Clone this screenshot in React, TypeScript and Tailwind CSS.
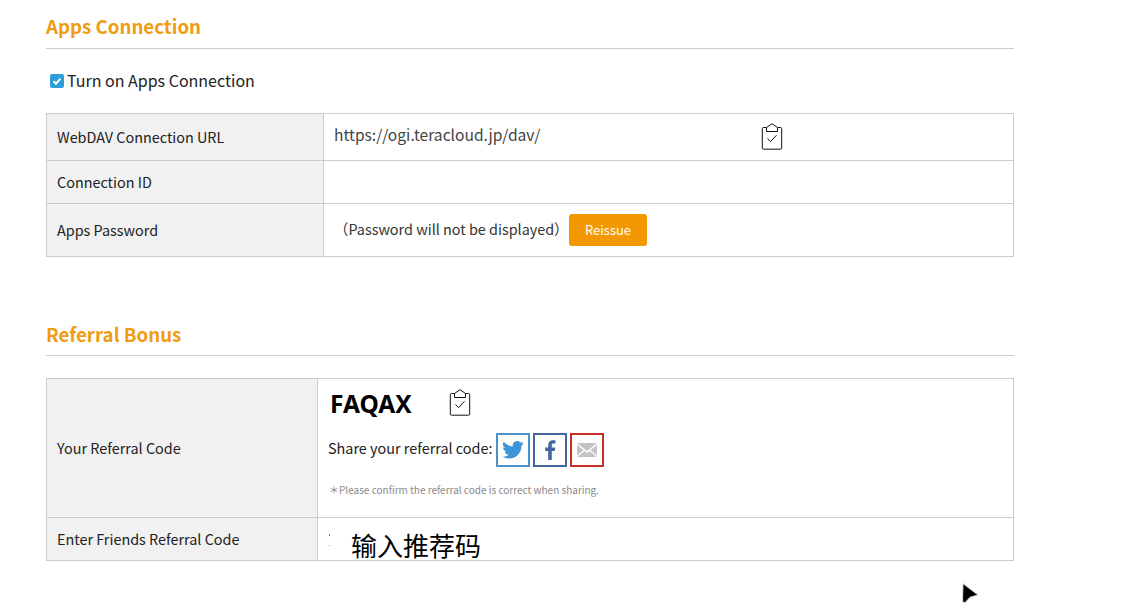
const font = { sans: "font-['Noto_Sans_CJK_JP','Noto_Sans',sans-serif]" };

const ClipboardIcon = () => (
  <svg width="22" height="27" viewBox="0 0 22 27" fill="none" stroke="#111" strokeWidth="1" strokeLinejoin="round">
    <path d="M5.500 4.500H2.500a1.200 1.200 0 0 0-1.200 1.200v19.300a1.200 1.200 0 0 0 1.200 1.200h17a1.200 1.200 0 0 0 1.200-1.200V5.700a1.200 1.200 0 0 0-1.200-1.200H16.500" />
    <path d="M5.500 8.500V4.500L11 .7l5.500 3.800v4z" />
    <path d="M6.500 15.500l3 3.200 6-6.500" />
  </svg>
);

const ShareButton = ({ border, children }: { border: string; children: React.ReactNode }) => (
  <span className={`flex h-[34px] w-[34px] items-center justify-center border-2 ${border}`}>{children}</span>
);

const SectionTitle = ({ children, className }: { children: string; className: string }) => (
  <h2 className={`border-b border-[#ccc] text-[18.700px] leading-[28px] font-bold text-[#f09c12] ${className}`}>{children}</h2>
);

const Label = ({ children, className }: { children: string; className: string }) => (
  <div className={`flex shrink-0 items-center border-r border-[#ccc] bg-[#f1f1f1] pl-[10px] text-[14.400px] text-[#222] ${className}`}>
    {children}
  </div>
);

export default function App() {
  return (
    <div className={`relative h-[605px] w-[1147px] overflow-hidden bg-white pl-[46px] ${font.sans}`}>
      <div className="w-[968px]">
        <SectionTitle className="pt-[12px] pb-[8px]">Apps Connection</SectionTitle>
        <label className="mt-[20px] ml-[4px] flex h-[24px] items-center gap-[3px] text-[16px] text-[#222]">
          <span className="flex h-[14px] w-[14px] items-center justify-center rounded-[2px] bg-[#2a9fd8]">
            <svg width="10" height="10" viewBox="0 0 10 10" fill="none" stroke="#fff" strokeWidth="2">
              <path d="M1.500 5.200l2.500 2.500 4.500-5" />
            </svg>
          </span>
          <span className="mb-[2px]">Turn on Apps Connection</span>
        </label>
        <div className="mt-[20px] border border-[#ccc]">
          <div className="flex h-[47px] border-b border-[#ccc]">
            <Label className="w-[277px]">WebDAV Connection URL</Label>
            <div className="flex flex-1 items-start pt-[8px] pl-[10px] text-[15.600px] leading-[24px] text-[#444]">
              <span className="w-[427px]">https://ogi.teracloud.jp/dav/</span>
              <span className="mt-[1px]"><ClipboardIcon /></span>
            </div>
          </div>
          <div className="flex h-[43px] border-b border-[#ccc]">
            <Label className="w-[277px]">Connection ID</Label>
            <div className="flex-1" />
          </div>
          <div className="flex h-[52px]">
            <Label className="w-[277px]">Apps Password</Label>
            <div className="flex flex-1 items-center pl-[10px] text-[14.400px] text-[#333]">
              <span className="mb-[3px] w-[235px] whitespace-nowrap">（Password will not be displayed）</span>
              <button className="h-[32px] w-[78px] rounded-[3px] bg-[#f39800] text-[13px] text-white">Reissue</button>
            </div>
          </div>
        </div>
        <SectionTitle className="mt-[63px] pb-[7px]">Referral Bonus</SectionTitle>
        <div className="mt-[22px] border border-[#ccc]">
          <div className="flex h-[139px] border-b border-[#ccc]">
            <Label className="w-[271px]">Your Referral Code</Label>
            <div className="flex-1 pl-[10px]">
              <div className="flex h-[48px] items-center">
                <span className="mt-[2px] ml-[2px] w-[119px] font-['Noto_Sans',sans-serif] text-[24.500px] font-bold text-black">FAQAX</span>
                <span className="mb-[2px]"><ClipboardIcon /></span>
              </div>
              <div className="mt-[6px] flex items-center text-[14.400px] text-[#222]">
                <span className="mr-[4px] mb-[5px]">Share your referral code:</span>
                <div className="flex gap-[3px]">
                  <ShareButton border="border-[#4b92c9]">
                    <svg width="22" height="18" viewBox="0 0 24 20" fill="#3d94d6">
                      <path d="M24 2.400a9.800 9.800 0 0 1-2.800.8A5 5 0 0 0 23.300.5a9.800 9.800 0 0 1-3.100 1.200 4.900 4.900 0 0 0-8.400 4.500A14 14 0 0 1 1.700.900a4.900 4.900 0 0 0 1.500 6.600 4.900 4.900 0 0 1-2.200-.6v.1a4.900 4.900 0 0 0 3.900 4.800 4.900 4.900 0 0 1-2.200.1 4.900 4.900 0 0 0 4.600 3.400A9.900 9.900 0 0 1 0 17.300 14 14 0 0 0 7.500 19.500c9.100 0 14-7.500 14-14v-.6A10 10 0 0 0 24 2.400z" />
                    </svg>
                  </ShareButton>
                  <ShareButton border="border-[#45659f]">
                    <svg width="12" height="20" viewBox="0 0 12 20" fill="#45659f">
                      <path d="M7.800 20v-9h3l.5-3.500H7.800V5.300c0-1 .3-1.700 1.800-1.700h1.800V.4C11.100.3 10 .2 8.700.2 6 .2 4.200 1.800 4.200 4.900v2.600h-3V11h3v9z" />
                    </svg>
                  </ShareButton>
                  <ShareButton border="border-[#c9302c]">
                    <svg width="20" height="14" viewBox="0 0 20 14" fill="#c4c4c4">
                      <path d="M0 0h20L10 8z" />
                      <path d="M0 1.800V12.500L6.500 7z" />
                      <path d="M20 1.800V12.500L13.500 7z" />
                      <path d="M0 14h20L12.500 8 10 10 7.500 8z" />
                    </svg>
                  </ShareButton>
                </div>
              </div>
              <p className="mt-[15px] ml-[1px] text-[10px] text-[#888]">＊Please confirm the referral code is correct when sharing.</p>
            </div>
          </div>
          <div className="flex h-[42px]">
            <Label className="w-[271px]">Enter Friends Referral Code</Label>
            <div className="relative flex-1 pt-[9px] pl-[33px] text-[26px] leading-[36px] font-['Noto_Sans_CJK_SC',sans-serif] text-black">
              <span className="absolute top-[16px] left-[11px] h-[2px] w-[1px] bg-[#777]" />
              <span className="absolute top-[27px] left-[11px] h-[1px] w-[1px] bg-[#999]" />
              输入推荐码
            </div>
          </div>
        </div>
      </div>
      <svg className="absolute top-[582px] left-[961px]" width="19" height="23" viewBox="0 0 19 23">
        <path d="M2 1.500L17 13L9 15.300L4 20.700L1.500 19.700z" fill="#000" stroke="#ddd" strokeWidth="1" strokeLinejoin="round" />
      </svg>
    </div>
  );
}
